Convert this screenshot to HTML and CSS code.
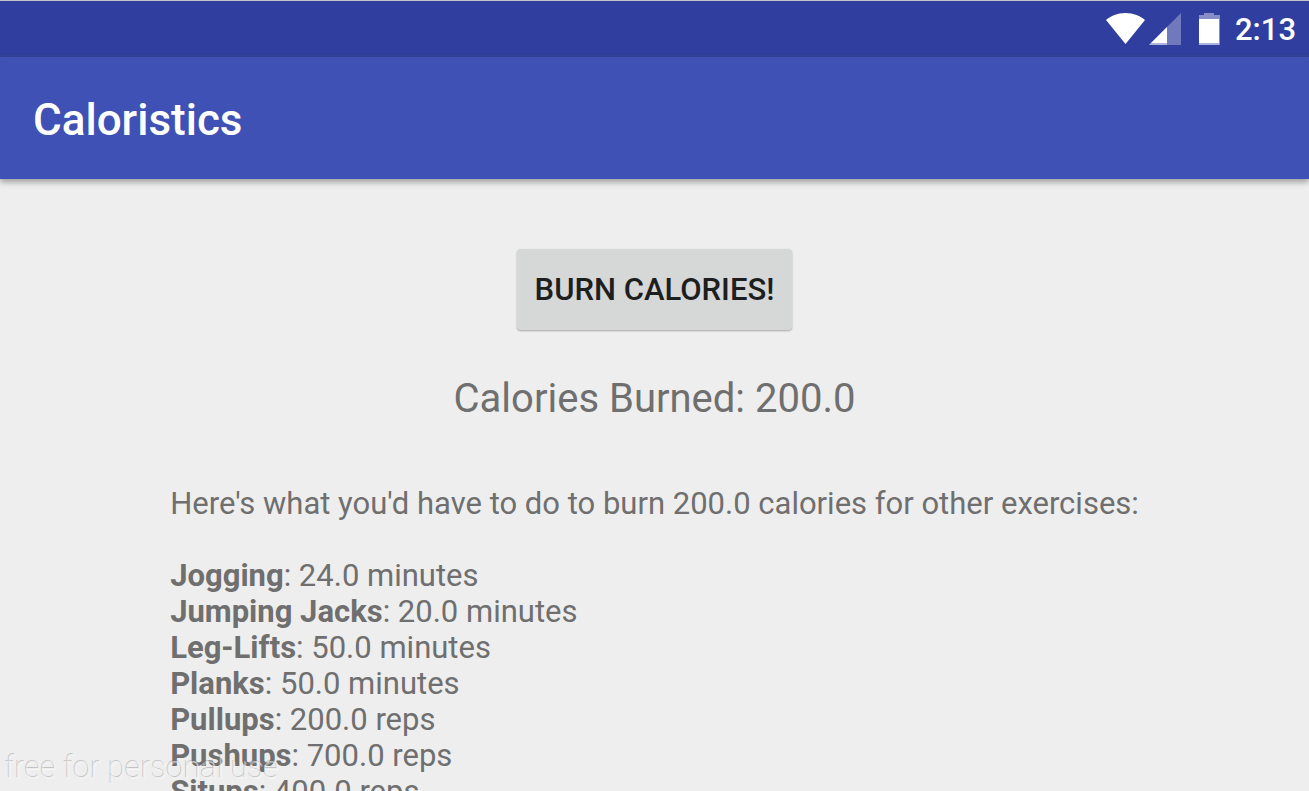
FILE: index.html
```html
<!DOCTYPE html>
<html lang="en">
<head>
<meta charset="utf-8">
<meta name="viewport" content="width=device-width, initial-scale=1">
<title>Caloristics</title>
<link rel="stylesheet" href="styles.css">
</head>
<body>
<div class="app">
  <div class="status-bar">
    <svg class="status-icons" width="115" height="34" viewBox="0 0 115 34" aria-hidden="true">
      <path fill="#fff" d="M0 7C5 3 11 0 19.500 0S34 3 39 7L19.500 31Z"/>
      <path fill="#7079bb" d="M75 0V32H43Z"/>
      <path fill="#fff" d="M61 14V30H45Z"/>
      <path fill="#adb3da" d="M45 30H61V32H43Z"/>
      <path fill="#858ec6" d="M98 0H108V2H114V32H93V2H98Z"/>
      <path fill="#fff" d="M93 6H113V30H93Z"/>
      <path fill="#adb3da" d="M93 30H113V32H93Z"/>
    </svg>
    <time class="clock">2:13</time>
  </div>
  <header class="app-bar">
    <h1 class="app-title">Caloristics</h1>
  </header>
  <main class="content">
    <button class="burn-button" type="button">BURN CALORIES!</button>
    <p class="total">Calories Burned: 200.0</p>
    <section class="results">
      <p class="intro">Here's what you'd have to do to burn 200.0 calories for other exercises:</p>
      <ul class="exercises">
        <li><b>Jogging</b>: 24.0 minutes</li>
        <li><b>Jumping Jacks</b>: 20.0 minutes</li>
        <li><b>Leg-Lifts</b>: 50.0 minutes</li>
        <li><b>Planks</b>: 50.0 minutes</li>
        <li><b>Pullups</b>: 200.0 reps</li>
        <li><b>Pushups</b>: 700.0 reps</li>
        <li><b>Situps</b>: 400.0 reps</li>
      </ul>
    </section>
  </main>
  <div class="watermark">free for personal use</div>
</div>
</body>
</html>
```
FILE: styles.css
```css
* {
  box-sizing: border-box;
}

body {
  margin: 0;
  background: #eee;
  color: #6f6f6f;
  font-family: Roboto, "Liberation Sans", sans-serif;
  font-size: 31px;
  line-height: 36px;
}

.app {
  position: relative;
  display: flex;
  flex-direction: column;
  height: 100vh;
  overflow: hidden;
}

.status-bar {
  display: flex;
  flex: none;
  align-items: center;
  justify-content: flex-end;
  gap: 14px;
  padding: 11px 13px 7px;
  border-top: 1px solid #c5c5c5;
  border-bottom: 2px solid #34429a;
  background: #303f9f;
  color: #fff;
}

.status-icons {
  flex: none;
}

.clock {
  font-weight: 500;
}

.app-bar {
  flex: none;
  padding: 35px 33px 31px;
  background: #3f51b5;
  box-shadow: 0 3px 6px rgba(0, 0, 0, 0.35);
  color: #fff;
}

.app-title {
  margin: 0;
  font-size: 44px;
  font-weight: 500;
  line-height: 56px;
}

.content {
  display: flex;
  flex-direction: column;
  align-items: center;
  padding: 70px 16px 0;
}

.burn-button {
  padding: 23px 18px 22px;
  border: 0;
  border-radius: 4px;
  background: #d6d7d7;
  box-shadow: 0 1px 2px rgba(0, 0, 0, 0.3);
  color: #1d1e1e;
  font: inherit;
  font-weight: 500;
}

.total {
  margin: 41px 0 59px;
  font-size: 40px;
  line-height: 56px;
}

.intro {
  margin: 0 0 36px;
}

.exercises {
  margin: 0;
  padding: 0;
  list-style: none;
}

.watermark {
  position: absolute;
  bottom: 3px;
  left: 5px;
  color: rgba(238, 238, 238, 0.7);
  font-size: 31px;
  font-weight: 100;
  line-height: 40px;
  text-shadow: -1px -1px 0 rgba(110, 110, 110, 0.35), 1px 1px 0 rgba(255, 255, 255, 0.5);
}
```
